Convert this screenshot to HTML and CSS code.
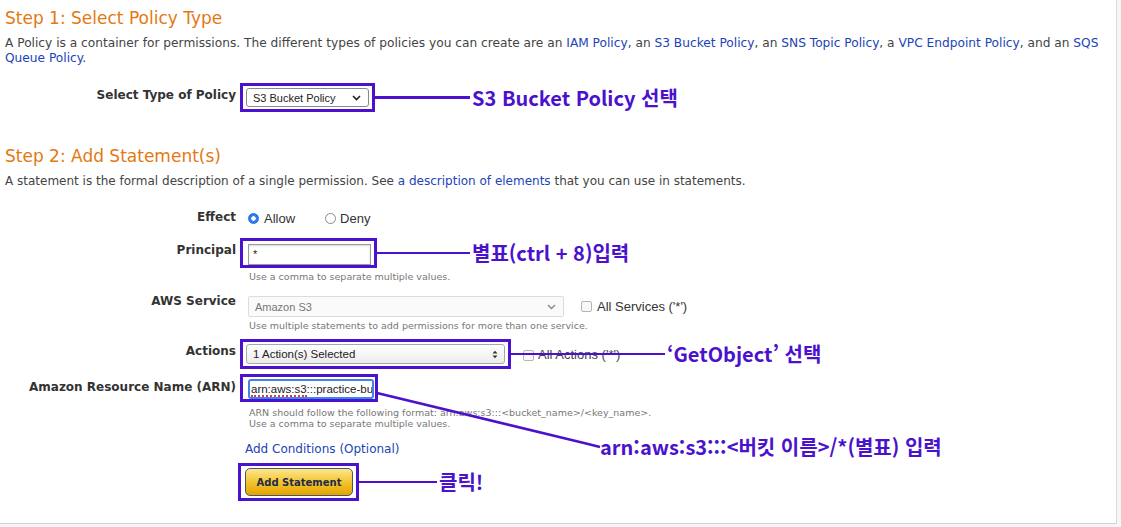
FILE: index.html
```html
<!DOCTYPE html>
<html lang="ko">
<head>
<meta charset="utf-8">
<title>AWS Policy Generator</title>
<link rel="stylesheet" href="styles.css">
</head>
<body>
<div class="page">
  <h1 class="step">Step 1: Select Policy Type</h1>
  <p class="intro">A Policy is a container for permissions. The different types of policies you can create are an <a href="#">IAM Policy</a>, an <a href="#">S3 Bucket Policy</a>, an <a href="#">SNS Topic Policy</a>, a <a href="#">VPC Endpoint Policy</a>, and an <a href="#">SQS Queue Policy</a>.</p>

  <div class="row row-type">
    <div class="label">Select Type of Policy</div>
    <div class="content">
      <div class="mark mark-type">
        <div class="select sel-type"><span>S3 Bucket Policy</span>
          <svg class="chev" width="9" height="6" viewBox="0 0 9 6"><path d="M1 1 L4.5 4.5 L8 1" fill="none" stroke="#222" stroke-width="1.6"/></svg>
        </div>
        <div class="callout"><span class="line w95"></span><span class="note">S3 Bucket Policy 선택</span></div>
      </div>
    </div>
  </div>

  <h1 class="step step2">Step 2: Add Statement(s)</h1>
  <p class="intro2">A statement is the formal description of a single permission. See <a href="#">a description of elements</a> that you can use in statements.</p>

  <div class="row row-effect">
    <div class="label">Effect</div>
    <div class="content radios">
      <span class="radio on"></span><span class="opt">Allow</span>
      <span class="radio deny"></span><span class="opt">Deny</span>
    </div>
  </div>

  <div class="row row-principal">
    <div class="label">Principal</div>
    <div class="content">
      <div class="mark mark-principal">
        <div class="input inp-principal">*</div>
        <div class="callout"><span class="line w93"></span><span class="note">별표(ctrl + 8)입력</span></div>
      </div>
      <div class="hint">Use a comma to separate multiple values.</div>
    </div>
  </div>

  <div class="row row-service">
    <div class="label">AWS Service</div>
    <div class="content">
      <div class="inline">
        <div class="select sel-service"><span>Amazon S3</span>
          <svg class="chev" width="9" height="6" viewBox="0 0 9 6"><path d="M1 1 L4.5 4.5 L8 1" fill="none" stroke="#888" stroke-width="1.4"/></svg>
        </div>
        <span class="check"></span><span class="opt">All Services ('*')</span>
      </div>
      <div class="hint">Use multiple statements to add permissions for more than one service.</div>
    </div>
  </div>

  <div class="row row-actions">
    <div class="label">Actions</div>
    <div class="content">
      <div class="inline">
        <div class="mark mark-actions">
          <div class="select sel-actions"><span>1 Action(s) Selected</span>
            <svg class="updown" width="6" height="9" viewBox="0 0 6 9"><path d="M0.5 3.5 L3 0.8 L5.5 3.5 Z M0.5 5.5 L3 8.2 L5.5 5.5 Z" fill="#333"/></svg>
          </div>
          <div class="callout"><span class="line w154"></span><span class="note">‘GetObject’ 선택</span></div>
        </div>
        <span class="check chk-actions"></span><span class="opt">All Actions ('*')</span>
      </div>
    </div>
  </div>

  <div class="row row-arn">
    <div class="label">Amazon Resource Name (ARN)</div>
    <div class="content">
      <div class="mark mark-arn">
        <div class="input inp-arn"><span class="spell">arn:aws:s3</span>:::practice-bu</div>
      </div>
      <div class="hint hint2">ARN should follow the following format: arn:aws:s3:::&lt;bucket_name&gt;/&lt;key_name&gt;.<br>Use a comma to separate multiple values.</div>
    </div>
  </div>

  <div class="bottom">
    <a href="#" class="cond">Add Conditions (Optional)</a>
    <div class="mark mark-btn">
      <button class="btn">Add Statement</button>
      <div class="callout"><span class="line w78"></span><span class="note">클릭!</span></div>
    </div>
  </div>

  <svg class="diag" width="1116" height="523" viewBox="0 0 1116 523"><path d="M377 393 L584 443 L600 447" fill="none" stroke="#4a12cc" stroke-width="2.5"/></svg>
  <div class="note note-arn">arn:aws:s3:::&lt;버킷 이름&gt;/*(별표) 입력</div>
</div>
</body>
</html>
```
FILE: styles.css
```css
html, body {
  margin: 0;
  padding: 0;
  background: #f6f6f6;
}
body {
  font-family: "DejaVu Sans", Verdana, sans-serif;
  color: #444;
}
a {
  color: #1a44b8;
  text-decoration: none;
}
.page {
  position: relative;
  width: 1117px;
  height: 524px;
  box-sizing: border-box;
  background: #fff;
  border-right: 1px solid #d9d9d9;
  border-bottom: 1px solid #d2d2d2;
  padding-left: 5px;
  overflow: hidden;
}
.step {
  margin: 8px 0 0;
  font-size: 17px;
  line-height: 20px;
  font-weight: normal;
  color: #e47911;
}
.step2 {
  margin-top: 34px;
}
.intro {
  margin: 8px 0 0;
  width: 1108px;
  font-size: 12.2px;
  line-height: 14.5px;
}
.intro2 {
  margin: 8px 0 0;
  font-size: 12px;
  line-height: 14px;
}
.row {
  display: flex;
  align-items: flex-start;
}
.label {
  width: 231px;
  flex: none;
  text-align: right;
  font-size: 12px;
  line-height: 14px;
  font-weight: bold;
  color: #333;
}
.content {
  margin-left: 4px;
  display: flex;
  flex-direction: column;
  align-items: flex-start;
}
.mark {
  position: relative;
  border: 3px solid #4a12cc;
  box-sizing: border-box;
}
.callout {
  position: absolute;
  left: 100%;
  top: 50%;
  margin-left: 3px;
  transform: translateY(-50%);
  display: flex;
  align-items: center;
  white-space: nowrap;
}
.line {
  display: block;
  height: 2.5px;
  background: #4a12cc;
}
.w95 { width: 95px; }
.w93 { width: 93px; }
.w154 { width: 154px; }
.w78 { width: 78px; }
.note {
  font-family: "Noto Sans CJK KR", "Noto Sans", sans-serif;
  font-weight: 700;
  font-size: 20px;
  line-height: 26px;
  color: #4a12cc;
  margin-left: 2px;
  white-space: nowrap;
}
.opt {
  font-family: "Liberation Sans", Arial, sans-serif;
  font-size: 13px;
  color: #333;
}
.hint {
  margin: 3px 0 0 9px;
  font-size: 9.5px;
  line-height: 12px;
  color: #777;
}
.hint2 {
  margin-top: 5px;
  line-height: 11px;
}

/* Step 1 type row */
.row-type {
  margin-top: 18px;
}
.row-type .label {
  padding-top: 5px;
}
.mark-type {
  width: 135px;
  height: 29px;
  padding: 2px 3px;
}
.select {
  position: relative;
  box-sizing: border-box;
  display: flex;
  align-items: center;
  font-family: "Liberation Sans", Arial, sans-serif;
  font-size: 11px;
  color: #222;
  padding-left: 6px;
}
.chev {
  position: absolute;
  right: 7px;
  top: 50%;
  margin-top: -3px;
}
.sel-type {
  width: 123px;
  height: 19px;
  border: 1px solid #8a8a8a;
  border-radius: 3px;
  background: #fff;
}

/* effect */
.row-effect {
  margin-top: 22px;
}
.radios {
  flex-direction: row;
  align-items: center;
  height: 14px;
  margin-left: 12px;
  margin-top: 1px;
}
.radio {
  width: 11px;
  height: 11px;
  box-sizing: border-box;
  border-radius: 50%;
  border: 1px solid #888;
  background: #fff;
  margin-right: 5px;
}
.radio.on {
  border: 1px solid #1f6fe6;
  background: radial-gradient(circle, #fff 0 2px, #2b7cf0 2.5px);
}
.radio.deny {
  margin-left: 30px;
  margin-right: 4px;
}

/* principal */
.row-principal {
  margin-top: 13px;
}
.row-principal .label {
  padding-top: 5px;
}
.mark-principal {
  width: 137px;
  height: 30px;
  padding: 3px 3px 0 5px;
}
.input {
  box-sizing: border-box;
  font-family: "Liberation Sans", Arial, sans-serif;
  color: #222;
  background: #fff;
  overflow: hidden;
  white-space: nowrap;
}
.inp-principal {
  width: 123px;
  height: 21px;
  border: 1px solid #9a9a9a;
  box-shadow: inset 0 1px 2px rgba(0,0,0,0.15);
  font-size: 11px;
  line-height: 19px;
  padding-left: 4px;
}

/* service */
.row-service {
  margin-top: 11px;
}
.inline {
  display: flex;
  align-items: center;
}
.sel-service {
  margin: 2px 0 0 8px;
  width: 316px;
  height: 21px;
  border: 1px solid #dcdcdc;
  border-radius: 2px;
  background: #fafafa;
  color: #777;
}
.check {
  width: 11px;
  height: 11px;
  box-sizing: border-box;
  border: 1px solid #b5b5b5;
  border-radius: 2px;
  background: #f7f7f7;
  margin: 2px 5px 0 17px;
}
.row-service .opt {
  margin-top: 2px;
}

/* actions */
.row-actions {
  margin-top: 7px;
}
.row-actions .label {
  padding-top: 5px;
}
.mark-actions {
  width: 271px;
  height: 30px;
  padding: 2px 3px;
}
.sel-actions {
  width: 259px;
  height: 20px;
  border: 1px solid #a8a8a8;
  border-radius: 3px;
  background: linear-gradient(#ffffff, #ececec);
  font-size: 11.5px;
}
.updown {
  position: absolute;
  right: 6px;
  top: 5px;
}
.chk-actions {
  margin-left: 12px;
  margin-right: 4px;
}
.row-actions .opt {
  color: #444;
}

/* arn */
.row-arn {
  margin-top: 5px;
}
.row-arn .label {
  padding-top: 6px;
}
.mark-arn {
  width: 138px;
  height: 28px;
  padding: 2px 3px 0 5px;
}
.inp-arn {
  width: 126px;
  height: 20px;
  border: 2px solid #3d84f0;
  border-radius: 3px;
  font-size: 11.5px;
  line-height: 16px;
  padding-left: 1px;
}
.spell {
  border-bottom: 2px dotted #e03a3a;
}

/* bottom */
.bottom {
  margin: 13px 0 0 233px;
  display: flex;
  flex-direction: column;
  align-items: flex-start;
}
.cond {
  margin-left: 7px;
  font-size: 12px;
  line-height: 14px;
}
.mark-btn {
  margin-top: 7px;
  width: 121px;
  height: 38px;
  padding: 2px 4px;
}
.btn {
  width: 108px;
  height: 28px;
  border: 1px solid #4e5468;
  border-radius: 5px;
  background: linear-gradient(#fde68f, #f3c531 50%, #e2a400);
  font-family: "DejaVu Sans", Verdana, sans-serif;
  font-size: 10px;
  font-weight: bold;
  color: #1e2a4a;
  padding: 0;
}

.diag {
  position: absolute;
  left: 0;
  top: 0;
  pointer-events: none;
}
.note-arn {
  position: absolute;
  left: 600px;
  top: 434px;
  margin: 0;
}
```
